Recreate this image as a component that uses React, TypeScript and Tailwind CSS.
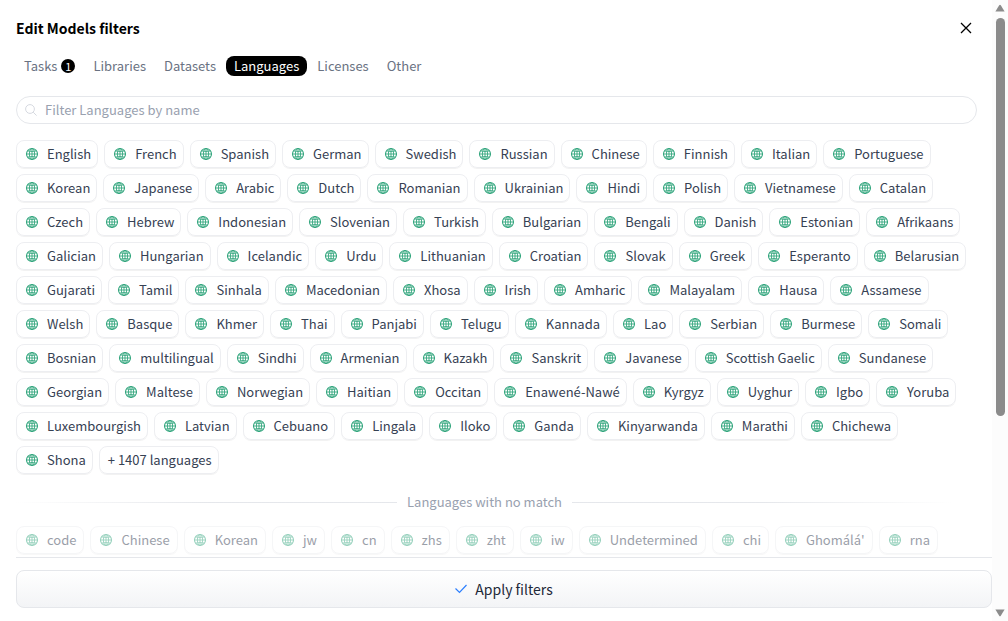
import { useState } from "react";

const tabs = ["Tasks", "Libraries", "Datasets", "Languages", "Licenses", "Other"];

const languages = [
  "English", "French", "Spanish", "German", "Swedish", "Russian", "Chinese", "Finnish", "Italian", "Portuguese",
  "Korean", "Japanese", "Arabic", "Dutch", "Romanian", "Ukrainian", "Hindi", "Polish", "Vietnamese", "Catalan",
  "Czech", "Hebrew", "Indonesian", "Slovenian", "Turkish", "Bulgarian", "Bengali", "Danish", "Estonian", "Afrikaans",
  "Galician", "Hungarian", "Icelandic", "Urdu", "Lithuanian", "Croatian", "Slovak", "Greek", "Esperanto", "Belarusian",
  "Gujarati", "Tamil", "Sinhala", "Macedonian", "Xhosa", "Irish", "Amharic", "Malayalam", "Hausa", "Assamese",
  "Welsh", "Basque", "Khmer", "Thai", "Panjabi", "Telugu", "Kannada", "Lao", "Serbian", "Burmese", "Somali",
  "Bosnian", "multilingual", "Sindhi", "Armenian", "Kazakh", "Sanskrit", "Javanese", "Scottish Gaelic", "Sundanese",
  "Georgian", "Maltese", "Norwegian", "Haitian", "Occitan", "Enawené-Nawé", "Kyrgyz", "Uyghur", "Igbo", "Yoruba",
  "Luxembourgish", "Latvian", "Cebuano", "Lingala", "Iloko", "Ganda", "Kinyarwanda", "Marathi", "Chichewa",
  "Shona",
];

const unmatched = ["code", "Chinese", "Korean", "jw", "cn", "zhs", "zht", "iw", "Undetermined", "chi", "Ghomálá'", "rna"];

function Globe() {
  return (
    <svg viewBox="0 0 14 14" className="size-3.5 shrink-0 text-[#33a67e]" fill="none" stroke="currentColor" aria-hidden="true">
      <circle cx="7" cy="7" r="5.5" strokeWidth="1.1" />
      <ellipse cx="7" cy="7" rx="2.6" ry="5.5" strokeWidth="0.9" />
      <path d="M7 1.5v11M1.5 7h11M2.6 3.9Q7 5 11.4 3.9M2.6 10.1Q7 9 11.4 10.1" strokeWidth="0.9" />
    </svg>
  );
}

function Chip({ label, faded = false, icon = true }: { label: string; faded?: boolean; icon?: boolean }) {
  return (
    <button
      type="button"
      className={`flex h-7 items-center gap-2 whitespace-nowrap rounded-lg border border-gray-200/70 pl-2 text-[13px] text-gray-700 shadow-2xs ${faded ? "pr-[7px] opacity-50" : "pr-1.5"}`}
    >
      {icon && <Globe />}
      <span>{label}</span>
    </button>
  );
}

export default function App() {
  const [active, setActive] = useState("Languages");
  return (
    <div className="flex h-screen bg-white font-['Noto_Sans_CJK_SC',sans-serif]">
      <main className="flex min-w-0 flex-1 flex-col pl-4">
        <header className="flex h-14 shrink-0 items-center justify-between pr-5">
          <h1 className="text-[14px] font-bold text-black">Edit Models filters</h1>
          <button type="button" aria-label="Close" className="text-black">
            <svg viewBox="0 0 12 12" className="size-3" fill="none" stroke="currentColor" strokeWidth="1.3" aria-hidden="true">
              <path d="M1 1l10 10M11 1L1 11" />
            </svg>
          </button>
        </header>
        <nav className="flex h-5 shrink-0 gap-0.5 text-[13px]">
          {tabs.map((tab) => (
            <button
              key={tab}
              type="button"
              onClick={() => setActive(tab)}
              className={`flex h-5 items-center gap-1 rounded-lg px-2 ${tab === active ? "bg-black text-white" : "text-gray-500"}`}
            >
              {tab}
              {tab === "Tasks" && (
                <span className="flex size-3.5 items-center justify-center rounded-full bg-black text-[11px] text-white">1</span>
              )}
            </button>
          ))}
        </nav>
        <label className="mt-5 mr-[15px] flex h-7 shrink-0 items-center gap-2 rounded-full border border-gray-200 px-2">
          <svg viewBox="0 0 12 12" className="size-3 text-gray-300" fill="none" stroke="currentColor" strokeWidth="0.9" aria-hidden="true">
            <circle cx="5" cy="5" r="4.4" />
            <path d="M8.2 8.2l3.4 3.4" />
          </svg>
          <input
            type="text"
            aria-label="Filter Languages by name"
            placeholder="Filter Languages by name"
            className="min-w-0 flex-1 bg-transparent text-[13px] text-gray-700 outline-none placeholder:text-gray-400"
          />
        </label>
        <div className="mt-4 min-h-0 flex-1 overflow-hidden">
          <div className="mr-4 flex flex-wrap gap-1.5">
            {languages.map((name) => (
              <Chip key={name} label={name} />
            ))}
            <Chip label="+ 1407 languages" icon={false} />
          </div>
          <div className="mt-[18px] mr-[39px] mb-[14px] flex h-5 items-center gap-2.5 text-[13px] text-gray-400">
            <div className="h-px flex-1 bg-linear-to-r from-white via-gray-200 to-gray-200" />
            <h2>Languages with no match</h2>
            <div className="h-px flex-1 bg-linear-to-l from-white via-gray-200 to-gray-200" />
          </div>
          <div className="mr-4 flex flex-wrap gap-1.5">
            {unmatched.map((name) => (
              <Chip key={name} label={name} faded />
            ))}
          </div>
        </div>
        <footer className="shrink-0 border-t border-gray-200 pt-3 pb-[13px]">
          <button
            type="button"
            className="flex h-[38px] w-full items-center justify-center gap-2 rounded-lg border border-gray-200 bg-linear-to-b from-white to-gray-100 text-[14px] text-gray-800"
          >
            <svg viewBox="0 0 12 12" className="size-3 text-blue-500" fill="none" stroke="currentColor" strokeWidth="1.2" aria-hidden="true">
              <path d="M0.5 5.5l4 4L11.5 2" />
            </svg>
            Apply filters
          </button>
        </footer>
      </main>
      <div className="flex w-4 shrink-0 flex-col items-center bg-[#fcfcfc] pt-1 pb-1 text-[#8b8b8b]" aria-hidden="true">
        <svg viewBox="0 0 10 8" className="h-2 w-2.5" fill="currentColor">
          <path d="M4.2 1.2Q5 0.2 5.8 1.2L9.6 7.6H0.4z" />
        </svg>
        <div className="my-1.5 flex w-[9px] flex-1 flex-col">
          <div className="h-[68%] rounded-full bg-[#8b8b8b]" />
        </div>
        <svg viewBox="0 0 10 8" className="h-2 w-2.5" fill="currentColor">
          <path d="M4.2 6.8Q5 7.8 5.8 6.8L9.6 0.4H0.4z" />
        </svg>
      </div>
    </div>
  );
}
